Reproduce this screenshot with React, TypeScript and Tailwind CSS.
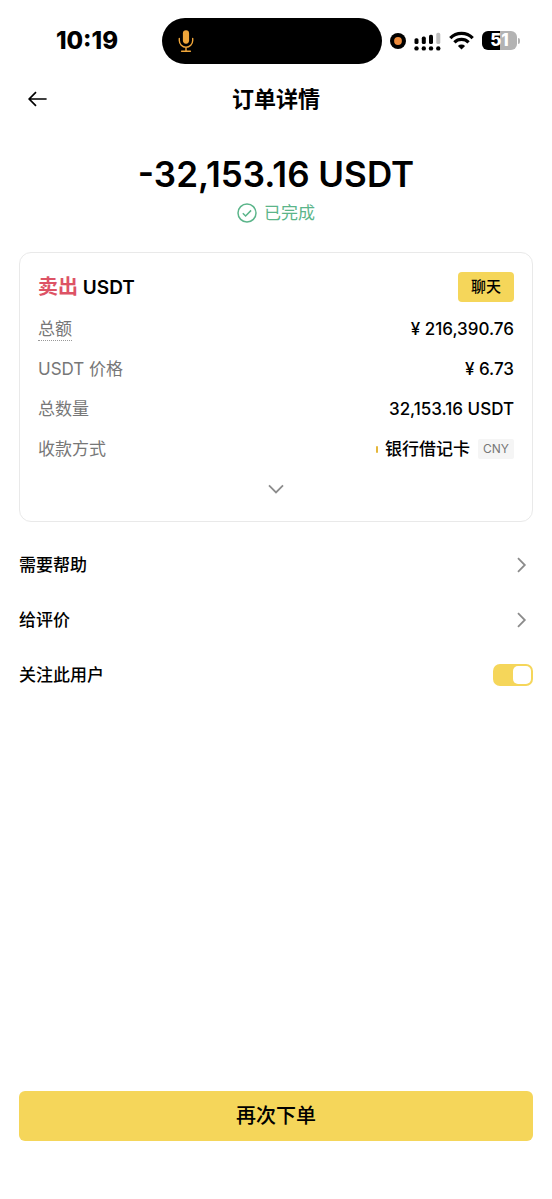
import { useState, type ReactNode } from "react";

function MicIcon() {
  return (
    <svg className="h-6 w-4" viewBox="0 0 16 24" fill="none" stroke="#f0a63a" aria-hidden="true">
      <rect x="4.9" y="1.3" width="6.2" height="13.4" rx="3.1" fill="#f0a63a" stroke="none" />
      <path d="M1.3 9.5v2a6.7 6.7 0 0 0 13.4 0v-2M8 18.2V22M3.6 22.2h8.8" strokeWidth="1.4" strokeLinecap="round" />
    </svg>
  );
}

function SignalIcon() {
  return (
    <svg className="h-5 w-[27px]" viewBox="0 0 27 20" aria-hidden="true">
      <rect x="0.5" y="7.2" width="4" height="5.8" rx="1.6" />
      <rect x="7.8" y="5.6" width="4" height="7.4" rx="1.6" />
      <rect x="15" y="3.8" width="4" height="9.2" rx="1.6" />
      <rect x="22.3" y="1.8" width="4" height="11.2" rx="1.6" fill="#bdbdbd" />
      <circle cx="2.5" cy="17.4" r="2.2" />
      <circle cx="9.8" cy="17.4" r="2.2" />
      <circle cx="17" cy="17.4" r="2.2" />
      <circle cx="24.3" cy="17.4" r="2.2" />
    </svg>
  );
}

function WifiIcon() {
  return (
    <svg className="h-[19px] w-[25px]" viewBox="0 0 25 19" fill="none" stroke="#000" aria-hidden="true">
      <path d="M1.3 7.1a15.8 15.8 0 0 1 22.4 0" strokeWidth="3.3" />
      <path d="M5.4 11.4a10 10 0 0 1 14.2 0" strokeWidth="3.2" />
      <path d="M12.5 18.6l-3.6-3.7a5.1 5.1 0 0 1 7.2 0z" fill="#000" stroke="none" />
    </svg>
  );
}

function ChevronRight() {
  return (
    <svg className="mr-1 h-4 w-4" viewBox="0 0 16 16" fill="none" stroke="#8c8c8c" strokeWidth="1.8" aria-hidden="true">
      <path d="M5 1.2L11.8 8 5 14.8" />
    </svg>
  );
}

function StatusBar() {
  return (
    <div className="grid h-[81px] grid-cols-[1fr_220px_1fr] items-center pr-2">
      <div className="pl-3 text-center text-2xl leading-7 font-extrabold">10:19</div>
      <div className="flex h-[46px] items-center rounded-full bg-black pl-4">
        <MicIcon />
      </div>
      <div className="flex items-center gap-2 pl-2">
        <svg className="h-4 w-4" viewBox="0 0 16 16" aria-hidden="true">
          <circle cx="8" cy="8" r="8" />
          <circle cx="8" cy="8" r="3.9" fill="#ee8b3c" />
        </svg>
        <SignalIcon />
        <WifiIcon />
        <div className="flex items-center gap-px">
          <div className="h-[19px] w-[35px] rounded-md bg-linear-to-r from-black from-52% to-[#b3b3b3] to-52% text-center text-[17px] leading-[19px] font-extrabold text-white">
            51
          </div>
          <div className="h-[6px] w-[2px] rounded-r-full bg-[#b3b3b3]" />
        </div>
      </div>
    </div>
  );
}

function DetailRow({ label, children }: { label: ReactNode; children: ReactNode }) {
  return (
    <div className="flex h-10 items-center justify-between">
      <dt className="text-[#777777]">{label}</dt>
      <dd className="flex items-center font-medium">{children}</dd>
    </div>
  );
}

function LinkRow({ children }: { children: ReactNode }) {
  return (
    <a href="#" className="flex h-[55px] items-center justify-between font-medium">
      {children}
      <ChevronRight />
    </a>
  );
}

export default function App() {
  const [following, setFollowing] = useState(true);

  return (
    <div className="flex min-h-screen flex-col bg-white font-['Inter','Noto_Sans_CJK_SC',sans-serif] text-[17px] leading-6 text-black">
      <StatusBar />

      <header className="grid h-[35px] grid-cols-[1fr_auto_1fr] items-center px-[27px]">
        <button type="button" aria-label="返回" className="w-fit">
          <svg className="h-5 w-5" viewBox="0 0 20 20" fill="none" stroke="#000" strokeWidth="1.7" aria-hidden="true">
            <path d="M19.6 10H2.4M9 3.2L2.2 10 9 16.8" />
          </svg>
        </button>
        <h1 className="text-[22px] leading-8 font-semibold">订单详情</h1>
      </header>

      <main className="flex flex-1 flex-col px-[19px] pb-[58px]">
        <p className="mt-9 text-center text-[35px] leading-[44px] font-semibold">-32,153.16 USDT</p>
        <p className="mt-[5px] flex items-center justify-center gap-[7px] text-[#5bb58a]">
          <svg className="h-5 w-5" viewBox="0 0 20 20" fill="none" stroke="#5bb58a" strokeWidth="1.5" aria-hidden="true">
            <circle cx="10" cy="10" r="9" />
            <path d="M5.8 10.2l2.8 2.8 5.5-5.6" />
          </svg>
          已完成
        </p>

        <section className="mt-[27px] rounded-xl border border-[#e9e9e9] px-[18px] pt-[19px] pb-3">
          <div className="flex items-center justify-between">
            <h2 className="text-[19px] leading-7 font-semibold">
              <span className="text-[20px] text-[#dd5365]">卖出</span> USDT
            </h2>
            <button type="button" className="h-[30px] rounded bg-[#f5d65a] px-[13px] text-[15px] leading-5 font-medium">
              聊天
            </button>
          </div>
          <dl className="mt-[7px]">
            <DetailRow label={<span className="border-b border-dotted border-[#999999] pb-px">总额</span>}>¥ 216,390.76</DetailRow>
            <DetailRow label="USDT 价格">¥ 6.73</DetailRow>
            <DetailRow label="总数量">32,153.16 USDT</DetailRow>
            <DetailRow label="收款方式">
              <span className="mr-[7px] h-[7px] w-[2px] rounded-full bg-[#e5b73b]" />
              银行借记卡
              <span className="ml-2 rounded-xs bg-[#f5f5f5] px-[5px] text-xs leading-5 font-normal text-[#777777]">
                CNY
              </span>
            </DetailRow>
          </dl>
          <button type="button" aria-label="展开" className="flex h-10 w-full items-center justify-center">
            <svg className="h-4 w-4" viewBox="0 0 16 16" fill="none" stroke="#8c8c8c" strokeWidth="1.8" aria-hidden="true">
              <path d="M1 4.4L8 11.4 15 4.4" />
            </svg>
          </button>
        </section>

        <div className="mt-[15px]">
          <LinkRow>需要帮助</LinkRow>
          <LinkRow>给评价</LinkRow>
          <label className="flex h-[55px] items-center justify-between font-medium">
            关注此用户
            <input
              type="checkbox"
              role="switch"
              checked={following}
              onChange={(event) => setFollowing(event.target.checked)}
              className="flex h-[22px] w-10 appearance-none items-center rounded-[7px] bg-[#dddddd] p-[2px] before:h-[18px] before:w-[18px] before:rounded-[5px] before:bg-white checked:justify-end checked:bg-[#f5d65a]"
            />
          </label>
        </div>

        <button type="button" className="mt-auto h-[50px] w-full rounded-md bg-[#f5d65a] text-[20px] leading-7 font-medium">
          再次下单
        </button>
      </main>
    </div>
  );
}
